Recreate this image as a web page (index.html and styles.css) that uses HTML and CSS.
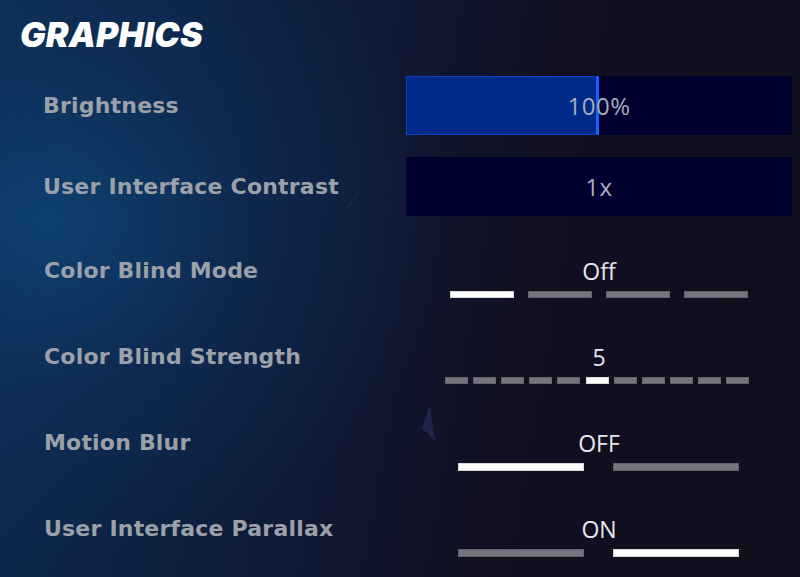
FILE: index.html
```html
<!DOCTYPE html>
<html lang="en">
<head>
  <meta charset="UTF-8" />
  <meta name="viewport" content="width=device-width, initial-scale=1.0" />
  <title>Graphics Settings</title>
  <link rel="stylesheet" href="styles.css">
</head>
<body>

  <main class="screen">
    <!-- background shards -->
    <svg class="shard" width="800" height="577" viewBox="0 0 800 577">
      <path d="M366 181 L347 208 L349 207 Z" fill="#2a3c6a" opacity="0.7" />
      <path d="M430 405 L422 428 L435 441 Z" fill="#1f2448" />
    </svg>

    <h1 class="title">GRAPHICS</h1>

    <section class="settings">
      <div class="row">
        <div class="label">Brightness</div>
        <div class="slider">
          <div class="slider-fill" style="width: 50%"></div>
          <span class="slider-value">100%</span>
        </div>
      </div>

      <div class="row row-gap">
        <div class="label">User Interface Contrast</div>
        <div class="slider">
          <span class="slider-value">1x</span>
        </div>
      </div>

      <div class="row choice first-choice">
        <div class="label">Color Blind Mode</div>
        <div class="control">
          <div class="value">Off</div>
          <div class="segments mode">
            <span class="seg on"></span>
            <span class="seg"></span>
            <span class="seg"></span>
            <span class="seg"></span>
          </div>
        </div>
      </div>

      <div class="row choice">
        <div class="label">Color Blind Strength</div>
        <div class="control">
          <div class="value">5</div>
          <div class="segments strength">
            <span class="seg"></span>
            <span class="seg"></span>
            <span class="seg"></span>
            <span class="seg"></span>
            <span class="seg"></span>
            <span class="seg on"></span>
            <span class="seg"></span>
            <span class="seg"></span>
            <span class="seg"></span>
            <span class="seg"></span>
            <span class="seg"></span>
          </div>
        </div>
      </div>

      <div class="row choice">
        <div class="label">Motion Blur</div>
        <div class="control">
          <div class="value">OFF</div>
          <div class="segments toggle">
            <span class="seg on"></span>
            <span class="seg"></span>
          </div>
        </div>
      </div>

      <div class="row choice">
        <div class="label">User Interface Parallax</div>
        <div class="control">
          <div class="value">ON</div>
          <div class="segments toggle">
            <span class="seg"></span>
            <span class="seg on"></span>
          </div>
        </div>
      </div>
    </section>
  </main>

</body>
</html>
```

FILE: styles.css
```css
:root {
  --label: #9ca0a9;
  --value: #e8e8ec;
  --bar-bg: #00002f;
  --bar-fill: #002a89;
  --bar-edge: #1562ff;
  --seg-off: #75747e;
  --seg-on: #ffffff;
}

* {
  margin: 0;
  padding: 0;
  box-sizing: border-box;
}

body {
  width: 800px;
  height: 577px;
  overflow: hidden;
  background: #100f1d;
  font-family: 'Inter', sans-serif;
}

.screen {
  position: relative;
  width: 800px;
  height: 577px;
  padding: 18px 8px 0 20px;
  background:
    radial-gradient(ellipse 400px 340px at 50px 220px, rgba(14, 66, 116, 0.9), rgba(14, 52, 96, 0.45) 50%, rgba(16, 15, 29, 0) 100%),
    linear-gradient(100deg, #0c2d55 0%, #0f1b38 40%, #110f20 65%, #100f1d 100%);
}

.shard {
  position: absolute;
  top: 0;
  left: 0;
  pointer-events: none;
}

/* Title */
.title {
  position: relative;
  font-size: 34px;
  line-height: 33px;
  font-weight: 900;
  font-style: italic;
  color: #ffffff;
  letter-spacing: 0.2px;
}

/* Rows */
.settings {
  position: relative;
  margin-top: 25px;
  padding-left: 23px;
}

.row {
  display: grid;
  grid-template-columns: 363px 386px;
  align-items: center;
}

.row-gap {
  margin-top: 22px;
}

.label {
  font-family: 'DejaVu Sans', sans-serif;
  font-size: 22px;
  line-height: 24px;
  font-weight: 700;
  color: var(--label);
  letter-spacing: 0.2px;
  white-space: nowrap;
}

/* Slider bars */
.slider {
  position: relative;
  height: 59px;
  background: var(--bar-bg);
  display: flex;
  align-items: center;
  justify-content: center;
}

.slider-fill {
  position: absolute;
  top: 0;
  left: 0;
  bottom: 0;
  background: var(--bar-fill);
  border: 1px solid #0b3fc4;
  border-right: 3px solid var(--bar-edge);
}

.slider-value {
  position: relative;
  font-family: 'Open Sans', sans-serif;
  font-size: 24px;
  color: #a9acbd;
  letter-spacing: 0.5px;
}

/* Choice rows */
.choice {
  height: 86px;
  align-items: start;
}

.first-choice {
  margin-top: 43px;
}

.choice .label {
  padding-left: 1px;
}

.control {
  display: flex;
  flex-direction: column;
  align-items: center;
  gap: 8px;
}

.value {
  font-family: 'Open Sans', sans-serif;
  font-size: 23px;
  line-height: 24px;
  color: var(--value);
}

.segments {
  display: grid;
}

.seg {
  display: block;
  height: 7px;
  background: var(--seg-off);
  box-shadow: inset 0 0 0 1px rgba(0, 0, 0, 0.15);
}

.seg.on {
  background: var(--seg-on);
}

.mode {
  grid-template-columns: repeat(4, 64px);
  gap: 14px;
}

.strength {
  grid-template-columns: repeat(11, 23px);
  gap: 5.2px;
  margin-left: -4px;
}

.toggle {
  grid-template-columns: repeat(2, 126px);
  gap: 29px;
  margin-left: -1px;
}

.toggle .seg {
  height: 8px;
}
```
